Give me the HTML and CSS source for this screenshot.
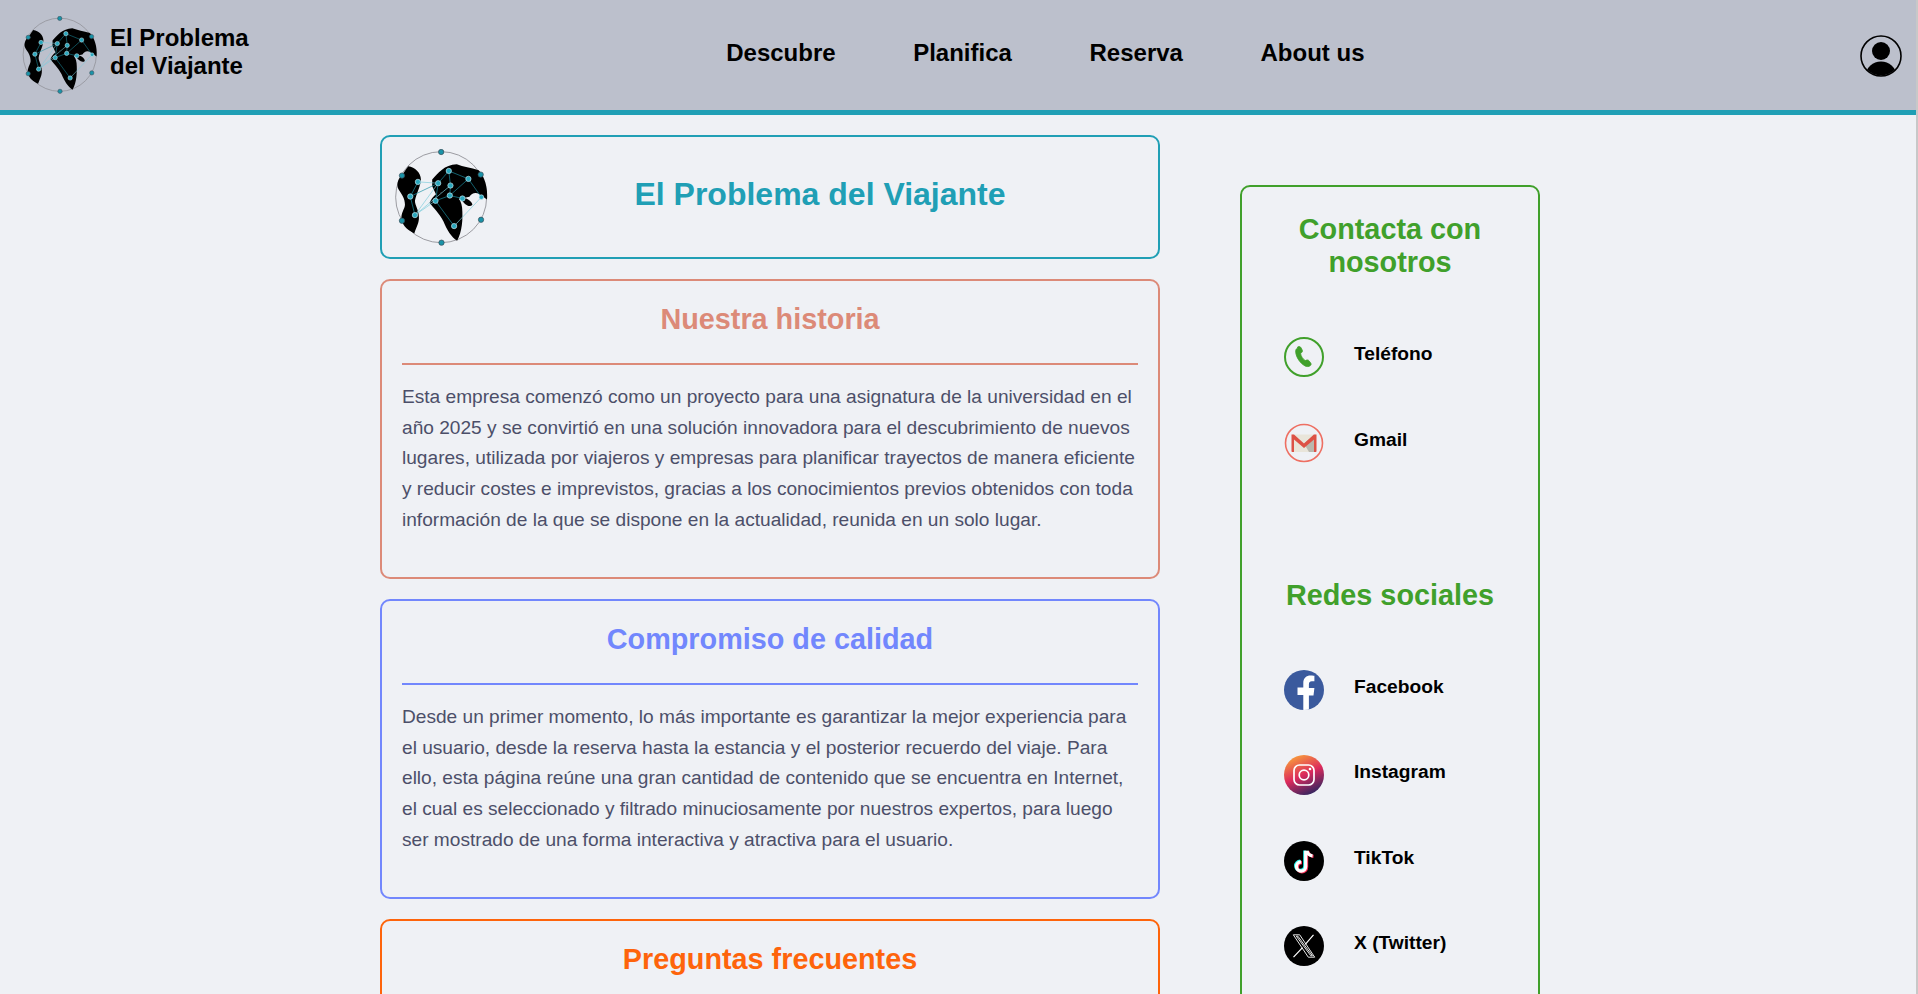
FILE: index.html
```html
<!DOCTYPE html>
<html lang="es">
<head>
<meta charset="utf-8">
<title>El Problema del Viajante</title>
<link rel="stylesheet" href="styles.css">
</head>
<body>
<svg class="defs" width="0" height="0" aria-hidden="true">
  <defs>
    <symbol id="logo" viewBox="70 70 292 292">
      <circle cx="215" cy="215" r="137" fill="none" stroke="#8a8a90" stroke-width="2.5"/>
      <g fill="#000">
        <path d="M116 122C136 124 154 142 154 162C154 180 140 204 136 226C136 240 148 254 148 274C149 292 141 304 134 324C118 316 100 304 96 284C92 264 106 250 106 238C106 218 96 206 87 192C80 178 84 164 92 154C102 146 108 130 116 122Z"/>
        <path d="M188 162C206 142 224 118 262 116C282 124 304 126 328 134C346 152 356 188 353 222L330 206C318 198 306 204 300 214L262 222L216 200L200 208L188 182Z"/>
        <path d="M180 232C192 204 216 192 238 204C258 212 274 214 278 246C281 282 278 320 263 346C246 336 232 312 222 288C210 264 190 246 180 232Z"/>
        <path d="M274 218C290 214 307 226 309 238C300 247 284 238 274 218Z"/>
      </g>
      <g stroke="#1b8fa3" stroke-width="2" fill="none">
        <path d="M206 173L238 136L243 180M238 136L297 160L241 210M297 160L336 215M122 213L206 173M122 213L136 269M145 169L122 213M198 226L241 210L279 219M243 180L241 210M198 226L254 302M206 173L198 226"/>
      </g>
      <g stroke="#7ccbdb" stroke-width="2" fill="none">
        <path d="M145 169L206 173M136 269L206 173M136 269L198 226M136 269L243 180M254 302L336 215"/>
      </g>
      <g fill="#1a93a8" stroke="#3a4a55" stroke-width="2">
        <circle cx="215" cy="79" r="8"/><circle cx="97" cy="150" r="8"/><circle cx="334" cy="147" r="8"/>
        <circle cx="97" cy="286" r="8"/><circle cx="335" cy="283" r="8"/><circle cx="216" cy="352" r="8"/>
      </g>
      <g fill="#2aa7bd" stroke="#c6e6ee" stroke-width="2">
        <circle cx="238" cy="136" r="8"/><circle cx="297" cy="160" r="8"/><circle cx="145" cy="169" r="8"/>
        <circle cx="206" cy="173" r="8"/><circle cx="243" cy="180" r="8"/><circle cx="122" cy="213" r="8"/>
        <circle cx="241" cy="210" r="8"/><circle cx="279" cy="219" r="8"/><circle cx="336" cy="215" r="7"/>
        <circle cx="198" cy="226" r="8"/><circle cx="136" cy="269" r="8"/><circle cx="254" cy="302" r="8"/>
      </g>
    </symbol>
    <linearGradient id="ig" x1="0.25" y1="0" x2="0.7" y2="1">
      <stop offset="0" stop-color="#f9a13a"/>
      <stop offset="0.5" stop-color="#dc2a5c"/>
      <stop offset="1" stop-color="#2c2560"/>
    </linearGradient>
  </defs>
</svg>

<header class="topbar">
  <a class="brand" href="#">
    <svg class="brand-logo"><use href="#logo"/></svg>
    <span class="brand-name">El Problema<br>del Viajante</span>
  </a>
  <nav class="main-nav">
    <a href="#">Descubre</a>
    <a href="#">Planifica</a>
    <a href="#">Reserva</a>
    <a href="#">About us</a>
  </nav>
  <a class="account" href="#" aria-label="Cuenta">
    <svg viewBox="0 0 42 42" width="42" height="42">
      <defs><clipPath id="uc"><circle cx="21" cy="21" r="19.5"/></clipPath></defs>
      <circle cx="21" cy="21" r="20" fill="none" stroke="#000" stroke-width="1.6"/>
      <circle cx="21" cy="16" r="9"/>
      <ellipse cx="21" cy="40" rx="15" ry="13.5" clip-path="url(#uc)"/>
    </svg>
  </a>
</header>

<div class="page">
  <main class="content">
    <section class="card card-hero">
      <svg class="hero-logo"><use href="#logo"/></svg>
      <h1>El Problema del Viajante</h1>
    </section>

    <section class="card card-salmon">
      <h2>Nuestra historia</h2>
      <hr>
      <p>Esta empresa comenzó como un proyecto para una asignatura de la universidad en el año 2025 y se convirtió en una solución innovadora para el descubrimiento de nuevos lugares, utilizada por viajeros y empresas para planificar trayectos de manera eficiente y reducir costes e imprevistos, gracias a los conocimientos previos obtenidos con toda información de la que se dispone en la actualidad, reunida en un solo lugar.</p>
    </section>

    <section class="card card-blue">
      <h2>Compromiso de calidad</h2>
      <hr>
      <p>Desde un primer momento, lo más importante es garantizar la mejor experiencia para el usuario, desde la reserva hasta la estancia y el posterior recuerdo del viaje. Para ello, esta página reúne una gran cantidad de contenido que se encuentra en Internet, el cual es seleccionado y filtrado minuciosamente por nuestros expertos, para luego ser mostrado de una forma interactiva y atractiva para el usuario.</p>
    </section>

    <section class="card card-orange">
      <h2>Preguntas frecuentes</h2>
    </section>
  </main>

  <aside class="sidebar">
    <h2>Contacta con nosotros</h2>
    <ul class="links">
      <li><a href="#">
        <svg class="ico" viewBox="0 0 40 40"><circle cx="20" cy="20" r="19" fill="none" stroke="#40a02b" stroke-width="2"/><path fill="#40a02b" stroke="#40a02b" stroke-width="0.800" stroke-linejoin="round" d="M13.600 10c1.500-.8 2.600-.5 3.300.6l1.300 2.400c.5 1 .3 1.900-.6 2.600l-1 .8c.3 2.600 2.200 5.600 4.600 7.200l1.300-.5c1-.4 1.900-.1 2.500.7l1.700 2.200c.7 1 .5 2-.5 2.700-1.500 1-3.400 1.200-5.200.2-4.900-2.700-8.800-8.500-9.300-13.700-.2-2 .4-3.500 1.900-4.200z"/></svg>
        <span>Teléfono</span></a></li>
      <li><a href="#">
        <svg class="ico" viewBox="0 0 40 40"><circle cx="20" cy="20" r="18.500" fill="none" stroke="#ee6f62" stroke-width="1.600"/><path fill="#e9e5da" d="M8 11.500h24V29H8z"/><path fill="#b9b8ae" d="M20 20.500l10-9V29h-5z"/><path fill="#dd5145" d="M7.500 11.500h2.500l10 9 10-9h2.500V28c0 .6-.4 1-1 1h-1.500V16.500l-10 8.500-10-8.500V29H8.500c-.6 0-1-.4-1-1z"/></svg>
        <span>Gmail</span></a></li>
    </ul>

    <h2 class="next">Redes sociales</h2>
    <ul class="links">
      <li><a href="#">
        <svg class="ico" viewBox="0 0 40 40"><defs><clipPath id="fb"><circle cx="20" cy="20" r="20"/></clipPath></defs><circle cx="20" cy="20" r="20" fill="#3b5a9d"/><path clip-path="url(#fb)" fill="#fff" d="M19.300 40V25h-5.800v-7.500h5.800v-4.500c0-5 3-7.500 7.300-7.500 2 0 3.800.3 3.800.3v5.500h-2.500c-2.300 0-3 1.400-3 2.900v3.800h5.500l-.9 7.500h-4.600V40z"/></svg>
        <span>Facebook</span></a></li>
      <li><a href="#">
        <svg class="ico" viewBox="0 0 40 40"><circle cx="20" cy="20" r="20" fill="url(#ig)"/><rect x="10" y="10" width="20" height="20" rx="5.500" fill="none" stroke="#fff" stroke-width="1.700"/><circle cx="20" cy="20" r="4.800" fill="none" stroke="#fff" stroke-width="1.700"/><circle cx="26" cy="14" r="1.300" fill="#fff"/></svg>
        <span>Instagram</span></a></li>
      <li><a href="#">
        <svg class="ico" viewBox="0 0 40 40"><circle cx="20" cy="20" r="20" fill="#000"/><path fill="none" stroke="#25f4ee" stroke-width="3.200" d="M20.800 9.500v15.300a4.600 4.600 0 1 1-4.600-4.600"/><path fill="none" stroke="#fe2c55" stroke-width="3.200" d="M22.600 11v15.300a4.600 4.600 0 1 1-4.600-4.600M24 10.500c.6 2.700 2.500 4.500 5.500 4.800"/><path fill="none" stroke="#fff" stroke-width="3.200" d="M21.700 9.800v15.700a4.600 4.600 0 1 1-4.600-4.600M23 9.800c.6 2.900 2.500 4.700 5.500 5"/></svg>
        <span>TikTok</span></a></li>
      <li><a href="#">
        <svg class="ico" viewBox="0 0 40 40"><circle cx="20" cy="20" r="20" fill="#000"/><path fill="none" stroke="#fff" stroke-width="0.900" d="M9.300 8.800h6.400L30.700 31.200h-6.400zM12.300 10.200l14.500 19.600h1.600L13.900 10.200z"/><path fill="none" stroke="#fff" stroke-width="1.200" d="M29.500 8.800L21.300 18.300M18.500 21.600L9.500 31.200"/></svg>
        <span>X (Twitter)</span></a></li>
    </ul>
  </aside>
</div>
<div class="scroll-edge"></div>
</body>
</html>
```
FILE: styles.css
```css
* { box-sizing: border-box; }

html, body {
  height: 100%;
  overflow: hidden;
}

body {
  margin: 0;
  background: #eff1f5;
  color: #4c4f69;
  font-family: "Liberation Sans", Arial, sans-serif;
}

a { color: inherit; text-decoration: none; }

.defs { position: absolute; }

.topbar {
  height: 115px;
  border-bottom: 5px solid #209fb5;
  background: #bcc0cc;
  padding: 0 16px 0 21px;
  display: flex;
  align-items: center;
  justify-content: space-between;
  color: #000;
}

.brand {
  display: flex;
  align-items: center;
  gap: 11px;
}

.brand-logo {
  width: 78px;
  height: 78px;
}

.brand-name {
  padding-bottom: 6px;
  font-size: 24px;
  font-weight: 700;
  line-height: 27.600px;
}

.main-nav {
  display: flex;
  gap: 77.600px;
  margin-right: 18px;
  padding-bottom: 4px;
  font-size: 24px;
  font-weight: 700;
}

.account {
  display: flex;
  margin-top: 1px;
}

.page {
  display: flex;
  align-items: flex-start;
  justify-content: center;
  gap: 80px;
  width: 1920px;
}

.content {
  width: 780px;
  padding-top: 20px;
  display: flex;
  flex-direction: column;
  gap: 20px;
}

.card {
  border: 2px solid;
  border-radius: 10px;
  padding: 20px;
}

.card h2 {
  margin: 2px 0 0;
  font-size: 28.800px;
  line-height: 33px;
  text-align: center;
}

.card hr {
  height: 2px;
  margin: 26.500px 0 17.500px;
  border: 0;
  color: inherit;
  background: currentColor;
}

.card p {
  margin: 0 0 21.800px;
  color: #4c4f69;
  font-size: 19.130px;
  line-height: 30.640px;
}

.card-hero {
  height: 124px;
  padding: 13px 8px 13px 11px;
  display: flex;
  align-items: center;
  color: #209fb5;
  border-color: #209fb5;
}

.hero-logo {
  width: 97px;
  height: 97px;
  flex: none;
}

.card-hero h1 {
  flex: 1;
  margin: 0 0 5px;
  font-size: 32px;
  text-align: center;
}

.card-salmon { color: #dc8a78; }
.card-blue { color: #7287fd; }

.card-orange {
  color: #fe640b;
  min-height: 400px;
}

.sidebar {
  width: 300px;
  margin-top: 70px;
  padding: 26px 40px 40px 42px;
  border: 2px solid #40a02b;
  border-radius: 10px;
  color: #000;
}

.sidebar h2 {
  margin: 0 2px 0 0;
  color: #40a02b;
  font-size: 28.800px;
  line-height: 33px;
  text-align: center;
}

.sidebar h2.next { margin-top: 116px; }

.links {
  list-style: none;
  margin: 58px 0 0;
  padding: 0;
  display: flex;
  flex-direction: column;
  gap: 45.500px;
}

.links a {
  display: flex;
  align-items: center;
  gap: 30px;
  font-size: 19.200px;
  font-weight: 700;
}

.links span { padding-bottom: 6px; }

.ico {
  width: 40px;
  height: 40px;
  flex: none;
}

.scroll-edge {
  position: fixed;
  top: 0;
  right: 0;
  bottom: 0;
  width: 2px;
  background: #c8c8c8;
}
```
